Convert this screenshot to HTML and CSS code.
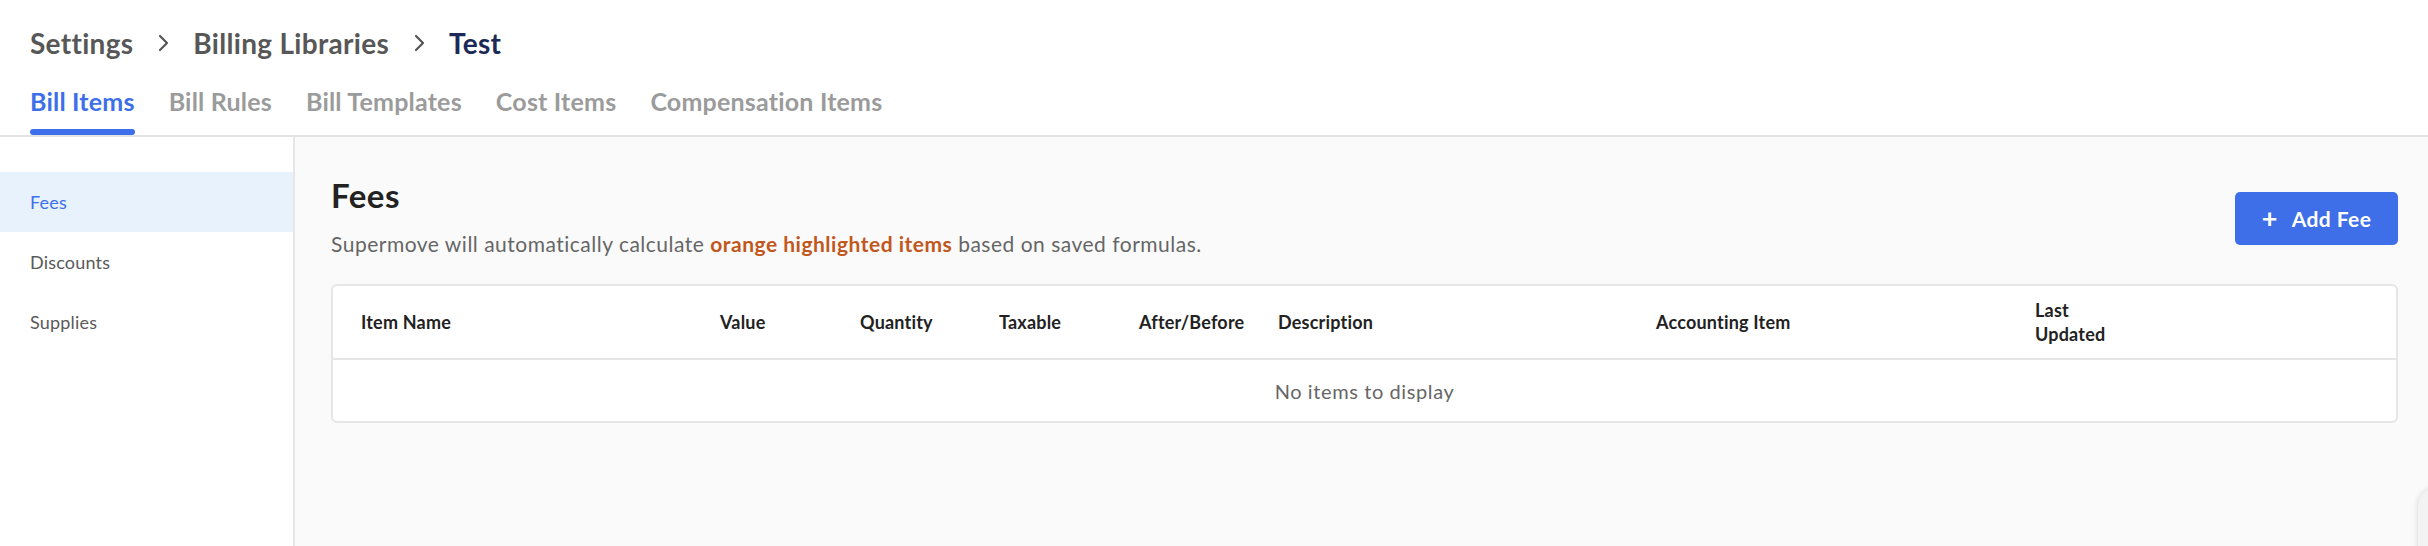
FILE: index.html
```html
<!DOCTYPE html>
<html>
<head>
<meta charset="utf-8">
<link rel="stylesheet" href="styles.css">
</head>
<body>
<div class="page">
  <header class="header">
    <div class="breadcrumb">
      <span class="crumb">Settings</span>
      <svg class="chev" viewBox="0 0 12 20" width="12" height="20"><path d="M2 3 L9 10 L2 17" fill="none" stroke="#555" stroke-width="2.2" stroke-linecap="round" stroke-linejoin="round"/></svg>
      <span class="crumb">Billing Libraries</span>
      <svg class="chev" viewBox="0 0 12 20" width="12" height="20"><path d="M2 3 L9 10 L2 17" fill="none" stroke="#555" stroke-width="2.2" stroke-linecap="round" stroke-linejoin="round"/></svg>
      <span class="crumb current">Test</span>
    </div>
    <nav class="tabs">
      <div class="tab active">Bill Items</div>
      <div class="tab">Bill Rules</div>
      <div class="tab">Bill Templates</div>
      <div class="tab">Cost Items</div>
      <div class="tab">Compensation Items</div>
    </nav>
  </header>
  <div class="body">
    <aside class="sidebar">
      <div class="side-item active">Fees</div>
      <div class="side-item">Discounts</div>
      <div class="side-item">Supplies</div>
    </aside>
    <main class="content">
      <div class="content-head">
        <div class="titles">
          <h1 class="title">Fees</h1>
          <p class="subtitle">Supermove will automatically calculate <span class="orange">orange highlighted items</span> based on saved formulas.</p>
        </div>
        <button class="add-btn"><span class="plus">+</span><span>Add Fee</span></button>
      </div>
      <div class="table">
        <div class="thead">
          <div class="th">Item Name</div>
          <div class="th">Value</div>
          <div class="th">Quantity</div>
          <div class="th">Taxable</div>
          <div class="th">After/Before</div>
          <div class="th">Description</div>
          <div class="th">Accounting Item</div>
          <div class="th">Last Updated</div>
          <div class="th"></div>
        </div>
        <div class="empty">No items to display</div>
      </div>
    </main>
  </div>
  <div class="widget"></div>
</div>
</body>
</html>
```
FILE: styles.css
```css
* { box-sizing: border-box; }
html, body { margin: 0; padding: 0; }
body {
  width: 2428px;
  height: 546px;
  overflow: hidden;
  font-family: Lato, "Noto Sans", "Liberation Sans", sans-serif;
  background: #ffffff;
}
.page {
  position: relative;
  width: 2428px;
  height: 546px;
  overflow: hidden;
  display: flex;
  flex-direction: column;
}
.header {
  background: #fff;
  padding-left: 30px;
  border-bottom: 2px solid #e3e3e3;
  height: 137px;
  flex: none;
}
.breadcrumb {
  display: flex;
  align-items: center;
  height: 86px;
}
.crumb {
  font-size: 28px;
  font-weight: 700;
  color: #575757;
  letter-spacing: 0.3px;
}
.crumb.current { color: #1c2a57; }
.chev { margin: 0 23px 0 25px; }
.tabs {
  display: flex;
  gap: 34px;
  height: 49px;
}
.tab {
  font-size: 25px;
  font-weight: 700;
  color: #9b9b9b;
  letter-spacing: 0.2px;
  height: 49px;
  position: relative;
}
.tab.active { color: #3d6fea; }
.tab.active::after {
  content: "";
  position: absolute;
  left: 0;
  right: 0;
  bottom: 0;
  height: 6px;
  border-radius: 3px;
  background: #3d6fea;
}
.body {
  flex: 1;
  display: flex;
}
.sidebar {
  width: 295px;
  flex: none;
  border-right: 2px solid #e6e6e6;
  padding-top: 35px;
  background: #fff;
}
.side-item {
  height: 60px;
  display: flex;
  align-items: center;
  padding-left: 30px;
  font-size: 18px;
  letter-spacing: 0.2px;
  color: #5a5a5a;
}
.side-item.active {
  background: #e8f2fd;
  color: #3d6fea;
}
.content {
  flex: 1;
  background: #fafafa;
  padding: 38px 30px 0 36px;
}
.content-head {
  display: flex;
  justify-content: space-between;
  align-items: flex-start;
}
.title {
  margin: 0;
  font-size: 33px;
  font-weight: 700;
  color: #222;
  letter-spacing: 0.5px;
  line-height: 40px;
}
.subtitle {
  margin: 16px 0 0;
  font-size: 21px;
  color: #666;
  letter-spacing: 0.5px;
  line-height: 26px;
}
.orange { color: #c2571c; font-weight: 700; }
.add-btn {
  margin-top: 17px;
  width: 163px;
  height: 53px;
  border: none;
  border-radius: 5px;
  background: #3e6fe9;
  color: #fff;
  font-family: Lato, "Noto Sans", sans-serif;
  font-size: 21px;
  font-weight: 700;
  letter-spacing: 0.4px;
  display: flex;
  align-items: center;
  justify-content: center;
  gap: 14px;
  padding: 0;
}
.plus { font-size: 27px; font-weight: 700; line-height: 1; margin-top: -3px; }
.table {
  margin-top: 27px;
  background: #fff;
  border: 2px solid #e6e6e6;
  border-radius: 6px;
}
.thead {
  display: grid;
  grid-template-columns: 359px 140px 139px 140px 139px 378px 379px 90px 1fr;
  align-items: center;
  height: 74px;
  padding-left: 28px;
  border-bottom: 2px solid #e6e6e6;
}
.th {
  font-size: 18px;
  font-weight: 700;
  color: #222;
  letter-spacing: 0.2px;
  line-height: 24px;
}
.empty {
  height: 61px;
  display: flex;
  align-items: center;
  justify-content: center;
  font-size: 20px;
  letter-spacing: 0.6px;
  color: #666;
}
.widget {
  position: absolute;
  left: 2418px;
  top: 487px;
  width: 60px;
  height: 100px;
  border-radius: 20px 0 0 0;
  background: #f3f3f3;
  box-shadow: 0 0 6px rgba(0,0,0,0.15);
}
```
